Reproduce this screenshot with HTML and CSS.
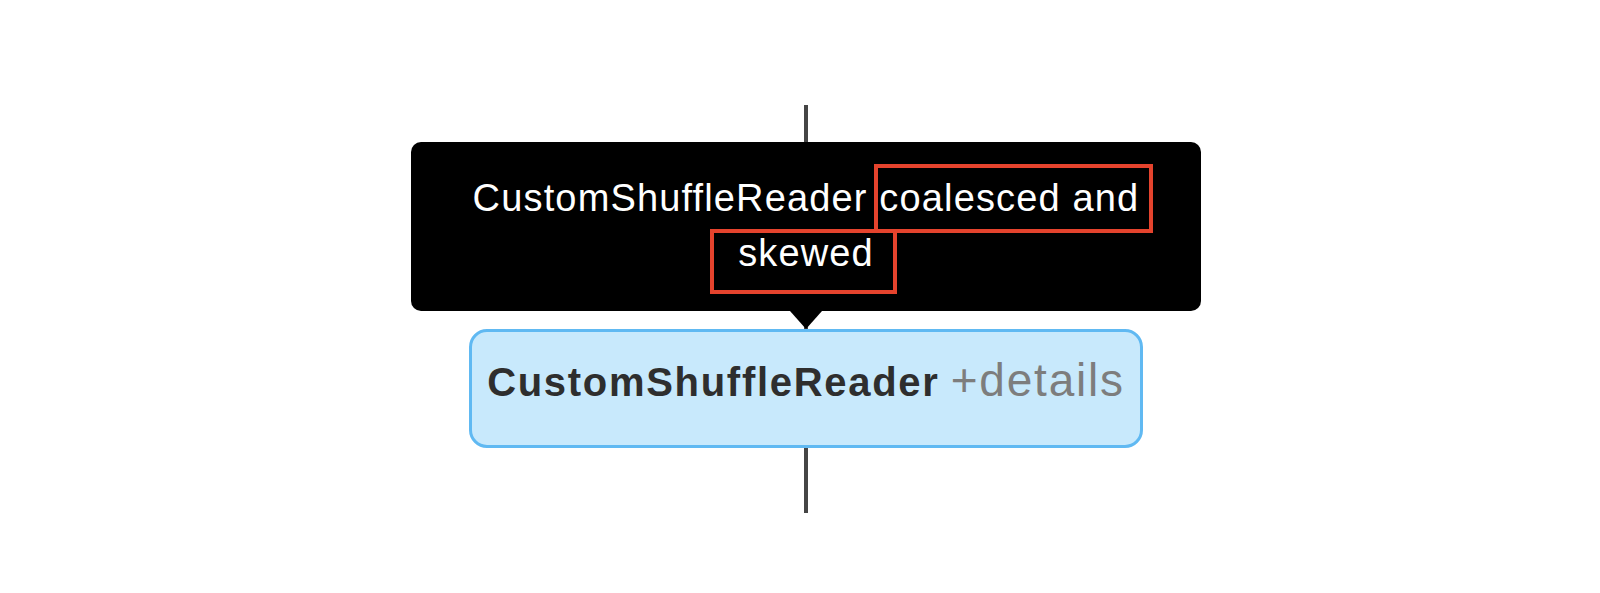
FILE: index.html
```html
<!DOCTYPE html>
<html>
<head>
<meta charset="utf-8">
<link rel="stylesheet" href="styles.css">
</head>
<body>
<div class="stage">
  <div class="edge edge-top"></div>
  <div class="node-wrap">
    <div class="tooltip">
      <div class="tip-text">CustomShuffleReader <span class="mark mark-a">coalesced and</span> <span class="mark mark-b">skewed</span></div>
      <div class="tip-arrow"></div>
    </div>
    <div class="node"><b class="node-name">CustomShuffleReader</b> <span class="node-details">+details</span></div>
  </div>
  <div class="edge edge-bottom"></div>
</div>
</body>
</html>
```

FILE: styles.css
```css
* { box-sizing: border-box; }
html, body { margin: 0; padding: 0; background: #fff; }
body { font-family: "Liberation Sans", Arial, Helvetica, sans-serif; }

.stage {
  width: 1600px;
  height: 593px;
  padding-top: 105px;
  padding-left: 12px;
  display: flex;
  flex-direction: column;
  align-items: center;
  overflow: hidden;
}

.edge {
  width: 4px;
  background: #454545;
  flex: none;
}
.edge-top { height: 224px; }
.edge-bottom { height: 65px; }

.node-wrap {
  position: relative;
  flex: none;
}

.node {
  width: 674px;
  height: 119px;
  padding: 27px 8px 0;
  border: 3px solid #60b9f2;
  border-radius: 18px;
  background: #c8e9fc;
  font-size: 40px;
  line-height: 46px;
  text-align: center;
  white-space: nowrap;
}
.node-name { color: #2e2e2e; font-weight: bold; letter-spacing: 1.7px; }
.node-details { color: #7d7d7d; font-size: 46px; line-height: 40px; letter-spacing: 1.8px; }

.tooltip {
  position: absolute;
  left: 50%;
  bottom: calc(100% + 18px);
  width: 790px;
  margin-left: -395px;
  background: #000;
  border-radius: 10px;
  padding: 29px 30px 30px;
  color: #fff;
  font-size: 38px;
  line-height: 55px;
  letter-spacing: 1.15px;
  text-align: center;
}
.tip-arrow {
  position: absolute;
  left: 50%;
  top: 100%;
  margin-left: -16px;
  width: 0;
  height: 0;
  border-left: 16px solid transparent;
  border-right: 16px solid transparent;
  border-top: 18px solid #000;
}

.mark { position: relative; }
.mark::after {
  content: "";
  position: absolute;
  border: 4px solid #e5432d;
  pointer-events: none;
}
.mark-a::after { left: -5px; right: -14px; top: -13px; bottom: -14px; }
.mark-b::after { left: -28px; right: -23px; top: -3px; bottom: -20px; }
```
